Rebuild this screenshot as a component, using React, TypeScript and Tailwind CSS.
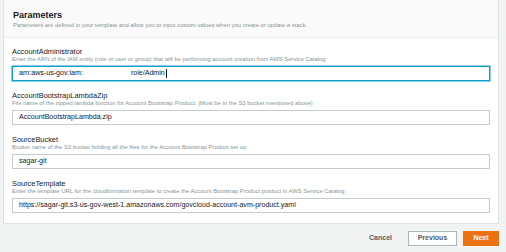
import React from 'react'

const fields = [
  {
    label: 'AccountAdministrator',
    hint: 'Enter the ARN of the IAM entity (role or user or group) that will be performing account creation from AWS Service Catalog',
    value: '',
    focused: true,
  },
  {
    label: 'AccountBootstrapLambdaZip',
    hint: 'File name of the zipped lambda function for Account Bootstrap Product. (Must be in the S3 bucket mentioned above)',
    value: 'AccountBootstrapLambda.zip',
  },
  {
    label: 'SourceBucket',
    hint: 'Bucket name of the S3 bucket holding all the files for the Account Bootstrap Product set up',
    value: 'sagar-git',
  },
  {
    label: 'SourceTemplate',
    hint: 'Enter the template URL for the cloudformation template to create the Account Bootstrap Product product in AWS Service Catalog',
    value: 'https://sagar-git.s3-us-gov-west-1.amazonaws.com/govcloud-account-avm-product.yaml',
  },
]

type Field = (typeof fields)[number] & { focused?: boolean }

const ParamField: React.FC<{ field: Field }> = ({ field }) => {
  return (
    <div className="flex flex-col">
      <div className="h-[9px] text-[7.4px] leading-[9px] text-[#16191f]">{field.label}</div>
      <div className="h-[7px] whitespace-nowrap text-[5.85px] leading-[7px] text-[#879596]">{field.hint}</div>
      {field.focused ? (
        <div className="mt-[3px] flex h-[15px] items-center border border-[#0aa0c8] bg-white pl-[6px] text-[7.1px] text-[#16191f] shadow-[0_0_0_0.5px_#0aa0c8]">
          <span>arn:aws-us-gov:iam:</span>
          <span className="w-[48px]" />
          <span>role/Admin</span>
          <span className="ml-[1px] h-[9px] w-px bg-[#16191f]" />
        </div>
      ) : (
        <div className="mt-[3px] flex h-[15px] items-center border border-[#c6cccd] bg-white pl-[6px] text-[7.1px] text-[#16191f]">
          {field.value}
        </div>
      )}
    </div>
  )
}

export default function App() {
  return (
    <div className="h-[252px] w-[506px] overflow-hidden bg-[#f2f3f3] pl-[3px] pr-[7px] font-['Liberation_Sans',sans-serif]">
      {/* Parameters card */}
      <div className="border border-t-0 border-[#dfe3e3] bg-white">
        <div className="flex h-[38px] flex-col justify-center border-b border-[#eaeded] bg-[#fafafa] px-[9px]">
          <div className="text-[9px] font-bold leading-[12px] text-[#16191f]">Parameters</div>
          <div className="text-[5.85px] leading-[8px] text-[#879596]">
            Parameters are defined in your template and allow you to input custom values when you create or update a stack.
          </div>
        </div>
        <div className="flex flex-col gap-[10px] px-[8px] pb-[10px] pt-[9px]">
          {fields.map((f) => (
            <ParamField key={f.label} field={f} />
          ))}
        </div>
      </div>

      {/* Footer actions */}
      <div className="mt-[7px] flex items-center justify-end">
        <button className="mr-[16px] text-[7px] font-bold text-[#545b64]">Cancel</button>
        <button className="mr-[6px] h-[15px] w-[49px] border border-[#aab7b8] bg-white text-[7px] font-bold text-[#545b64]">
          Previous
        </button>
        <button className="h-[15px] w-[36px] bg-[#ec7211] text-[7px] font-bold text-white">Next</button>
      </div>
    </div>
  )
}
